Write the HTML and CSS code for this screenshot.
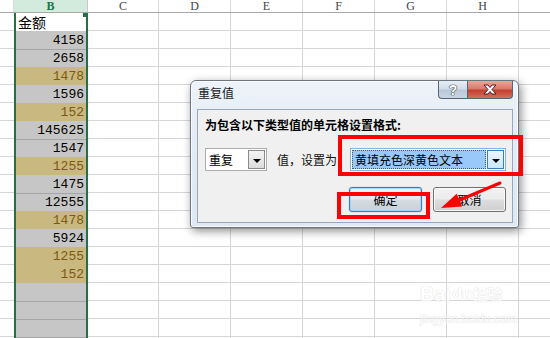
FILE: index.html
```html
<!DOCTYPE html>
<html lang="zh">
<head>
<meta charset="utf-8">
<link rel="stylesheet" href="styles.css">
</head>
<body>
<div class="sheet">
  <div class="hdr">
    <div class="h-a"></div>
    <div class="h-b">B</div>
    <div class="h-c first">C</div>
    <div class="h-c">D</div>
    <div class="h-c">E</div>
    <div class="h-c">F</div>
    <div class="h-c">G</div>
    <div class="h-c">H</div>
    <div class="h-rest"></div>
  </div>
  <div class="grid">
    <div class="col-a"></div>
    <div class="col-b">
      <span class="handle"></span>
      <div class="cell head">金额</div>
      <div class="cell g">4158</div>
      <div class="cell g">2658</div>
      <div class="cell y">1478</div>
      <div class="cell g">1596</div>
      <div class="cell y">152</div>
      <div class="cell g">145625</div>
      <div class="cell g">1547</div>
      <div class="cell y">1255</div>
      <div class="cell g">1475</div>
      <div class="cell g">12555</div>
      <div class="cell y">1478</div>
      <div class="cell g">5924</div>
      <div class="cell y">1255</div>
      <div class="cell y">152</div>
      <div class="cell g"></div>
      <div class="cell g"></div>
      <div class="cell g"></div>
      <div class="cell g"></div>
    </div>
    <div class="rest"></div>
  </div>
</div>

<div class="dialog">
  <div class="titlebar">
    <span class="title">重复值</span>
    <div class="tb-btns">
      <span class="tb-help">?</span>
      <span class="tb-close">
        <svg width="16" height="11" viewBox="0 0 16 11"><path d="M2 1 H6 L8 3.5 L10 1 H14 L10 5.5 L14 10 H10 L8 7.5 L6 10 H2 L6 5.5 Z" fill="#fff" stroke="#4a2020" stroke-width="1" stroke-linejoin="round"/></svg>
      </span>
    </div>
  </div>
  <div class="dbody">
    <div class="prompt">为包含以下类型值的单元格设置格式:</div>
    <div class="row">
      <div class="combo small">
        <span class="combo-text">重复</span>
        <span class="drop"><i class="tri"></i></span>
      </div>
      <span class="label">值，设置为</span>
      <div class="combo wide">
        <span class="combo-text sel">黄填充色深黄色文本</span>
        <span class="drop blue"><i class="tri"></i></span>
      </div>
    </div>
    <div class="buttons">
      <button class="btn default">确定</button>
      <button class="btn">取消</button>
    </div>
  </div>
</div>

<div class="mark box1"></div>
<div class="mark box2"></div>
<svg class="arrow" width="550" height="338" viewBox="0 0 550 338">
  <line x1="500" y1="183" x2="455" y2="202" stroke="#ff0000" stroke-width="3" stroke-linecap="round"/>
  <polygon points="441,208 456.7,193.8 462.1,206.6" fill="#ff0000"/>
</svg>

<div class="watermark">
  <div class="wm-top"><span>Bai</span><span class="paw">du</span><span>经验</span></div>
  <div class="wm-url">jingyan.baidu.com</div>
</div>
</body>
</html>
```

FILE: styles.css
```css
* { box-sizing: border-box; }
html, body { margin: 0; padding: 0; }
body {
  width: 550px;
  height: 338px;
  overflow: hidden;
  position: relative;
  background: #fff;
  font-family: "Liberation Mono", monospace;
}

.sheet { display: flex; flex-direction: column; height: 338px; overflow: hidden; }

.hdr {
  display: flex;
  height: 13px;
  flex: none;
  border-bottom: 1px solid #a8a8a8;
  font-family: "Liberation Serif", serif;
  font-size: 12px;
  line-height: 12px;
  color: #444;
}
.h-a { width: 14px; border-right: 1px solid #dadada; }
.h-b {
  width: 74px;
  background: #d3ebdc;
  color: #217346;
  font-weight: bold;
  text-align: center;
  border-right: 1px solid #c8c8c8;
}
.h-c { width: 72px; border-right: 1px solid #dadada; text-align: center; }
.h-c.first { width: 71px; }
.h-rest { flex: 1; }

.grid { flex: 1; display: flex; min-height: 0; overflow: hidden; }
.col-a {
  width: 14px;
  background: repeating-linear-gradient(to bottom, transparent 0 17px, #d6d6d6 17px 18px);
}
.col-b {
  width: 74px;
  border-left: 2px solid #217346;
  border-right: 2px solid #217346;
  display: flex;
  flex-direction: column;
  position: relative;
  overflow: hidden;
}
.rest {
  flex: 1;
  background-image:
    repeating-linear-gradient(to right, transparent 0 70px, #d6d6d6 70px 71px, transparent 71px 72px),
    repeating-linear-gradient(to bottom, transparent 0 17px, #d6d6d6 17px 18px);
}

.handle {
  position: absolute;
  right: -1px;
  top: 0;
  width: 4px;
  height: 4px;
  background: #217346;
  z-index: 2;
}

.cell {
  height: 18px;
  flex: none;
  text-align: right;
  padding: 1px 2px 0 0;
  font-size: 13px;
  line-height: 18px;
}
.cell.head {
  background: #fff;
  text-align: left;
  padding: 0 0 0 2px;
  font-family: "Noto Sans CJK SC", sans-serif;
  font-size: 14px;
  line-height: 18px;
}
.cell.g { background: #c6c6c6; color: #000; }
.cell.y { background: #c9b880; color: #7d5a10; }
.cell.g + .cell.g { box-shadow: inset 0 1px 0 #a6a6a6; }

/* dialog */
.dialog {
  position: absolute;
  left: 190px;
  top: 80px;
  width: 329px;
  display: flex;
  flex-direction: column;
  border: 1px solid #6b7580;
  border-radius: 6px 6px 3px 3px;
  background: linear-gradient(to bottom, #eef3f9 0%, #e3ebf5 40%, #dfe8f3 100%);
  box-shadow: 2px 3px 10px rgba(0, 0, 0, 0.45), inset 0 0 0 1px rgba(255,255,255,0.8);
  font-family: "Noto Sans CJK SC", sans-serif;
  font-size: 12px;
  color: #000;
}
.titlebar {
  height: 28px;
  display: flex;
  justify-content: space-between;
  align-items: flex-start;
  padding: 0 5px 0 7px;
}
.title { line-height: 16px; padding-top: 4px; color: #1a1a1a; }
.tb-btns { display: flex; height: 18px; }
.tb-help, .tb-close {
  height: 18px;
  display: flex;
  align-items: center;
  justify-content: center;
  border: 1px solid #5a6470;
  border-top: none;
}
.tb-help {
  width: 29px;
  border-right: none;
  border-radius: 0 0 0 4px;
  background: linear-gradient(to bottom, #e6edf5 0%, #d2dde9 45%, #b9c8d9 55%, #c8d5e3 100%);
  color: #fff;
  font-family: "Liberation Sans", sans-serif;
  font-weight: bold;
  font-size: 14px;
  text-shadow: 0 0 1px #333, 0 0 1px #333, 0 0 1px #333;
}
.tb-close {
  width: 46px;
  border-radius: 0 0 4px 0;
  background: linear-gradient(to bottom, #e9a79a 0%, #d77a6b 45%, #c4402f 55%, #d4705f 100%);
}

.dbody {
  margin: 0 0 4px 6px;
  width: 316px;
  border: 1px solid #98a8bc;
  background: #f0f0f0;
  padding: 7px 6px 10px 7px;
}
.prompt {
  font-weight: bold;
  line-height: 16px;
  white-space: nowrap;
}
.row {
  display: flex;
  align-items: center;
  margin-top: 15px;
  height: 23px;
}
.combo {
  height: 23px;
  display: flex;
  align-items: stretch;
  background: #fff;
  border: 1px solid #abadb3;
  padding: 1px;
}
.combo.small { width: 62px; }
.combo.wide { width: 156px; margin-left: auto; border-color: #7fb4e8; }
.combo-text {
  flex: 1;
  line-height: 19px;
  padding-left: 2px;
  white-space: nowrap;
  overflow: hidden;
}
.combo-text.sel {
  background: #99c8fa;
  outline: 1px dotted #555;
  outline-offset: -1px;
  padding-left: 3px;
}
.drop {
  width: 17px;
  margin-left: 1px;
  border: 1px solid #8a8a8a;
  background: linear-gradient(to bottom, #f4f4f4, #dcdcdc);
  display: flex;
  align-items: center;
  justify-content: center;
}
.drop.blue {
  border-color: #3c7fb1;
  background: linear-gradient(to bottom, #eaf6fd, #c9e8fb);
}
.tri {
  width: 0;
  height: 0;
  border-left: 4px solid transparent;
  border-right: 4px solid transparent;
  border-top: 4px solid #000;
  margin-top: 2px;
}
.label { margin-left: 10px; white-space: nowrap; color: #111; }

.buttons {
  display: flex;
  justify-content: flex-end;
  gap: 11px;
  margin-top: 16px;
}
.btn {
  width: 73px;
  height: 25px;
  border: 1px solid #707070;
  border-radius: 3px;
  background: linear-gradient(to bottom, #f2f2f2 0%, #ebebeb 48%, #dddddd 52%, #cfcfcf 100%);
  font-family: "Noto Sans CJK SC", sans-serif;
  font-size: 12px;
  color: #000;
  padding: 0;
  box-shadow: inset 0 0 0 1px rgba(255,255,255,0.8);
}
.btn.default {
  border-color: #3c7fb1;
  box-shadow: inset 0 0 0 1px #9fd6f6, 0 0 1px #3c7fb1;
  background: linear-gradient(to bottom, #eef3f6 0%, #e4ebef 48%, #d4dce1 52%, #c8d2d8 100%);
}

/* annotations */
.mark {
  position: absolute;
  border: 4px solid #ff0000;
  z-index: 5;
}
.box1 { left: 338px; top: 135px; width: 185px; height: 41px; }
.box2 { left: 337px; top: 192px; width: 93px; height: 27px; }
.arrow { position: absolute; left: 0; top: 0; z-index: 6; }

.watermark {
  position: absolute;
  left: 420px;
  top: 282px;
  width: 100px;
  color: #fff;
  font-family: "Liberation Sans", sans-serif;
  text-shadow: 0 0 1px #d0d0d0, 0 0 1px #d0d0d0;
  opacity: 0.7;
  z-index: 4;
}
.wm-top { display: flex; align-items: flex-end; gap: 1px; font-size: 20px; font-weight: bold; line-height: 24px; }
.paw { font-size: 16px; }
.wm-top span:last-child { font-family: "Noto Sans CJK SC", sans-serif; font-size: 15px; }
.wm-url { font-size: 12px; line-height: 14px; margin-top: 6px; }
```
